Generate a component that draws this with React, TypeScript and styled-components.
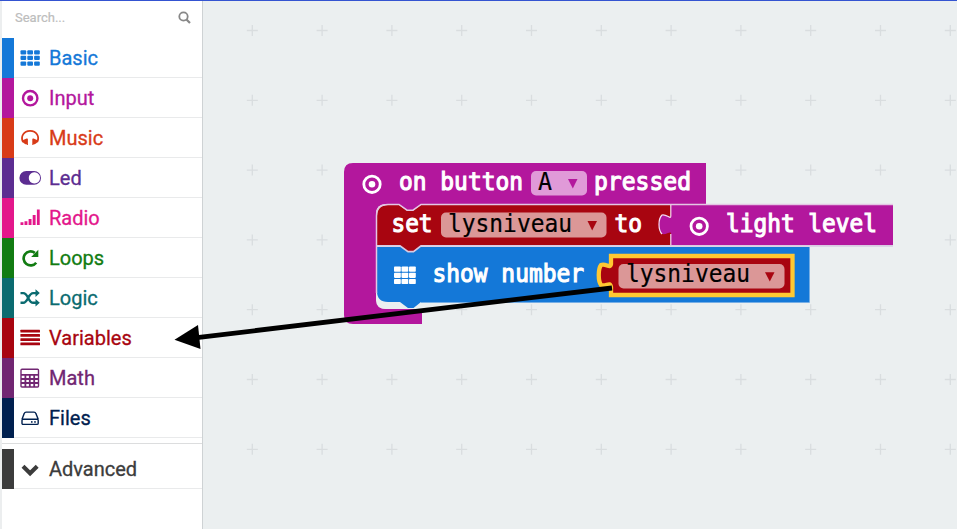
import React from "react";
import styled, { createGlobalStyle } from "styled-components";

const GlobalStyle = createGlobalStyle`
  * { box-sizing: border-box; }
  body { margin: 0; overflow: hidden; font-family: Roboto, sans-serif; }
`;

const Page = styled.div`
  display: flex;
  width: 957px;
  height: 529px;
  border-top: 1px solid #3454d1;
  background: #ebeff0;
  position: relative;
`;

const Toolbox = styled.aside`
  width: 203px;
  flex: none;
  display: flex;
  flex-direction: column;
  background: #fff;
  border-left: 2px solid #eceeef;
  border-right: 1px solid #ced2d4;
`;

const SearchBar = styled.div`
  height: 37px;
  flex: none;
  display: flex;
  align-items: center;
  justify-content: space-between;
  padding: 0 11px 4px 13px;
  font-size: 13px;
  color: #bdbdbd;
  -webkit-text-stroke: 0.2px currentColor;
`;

const Category = styled.div<{ $color: string }>`
  height: 40px;
  flex: none;
  display: flex;
  align-items: center;
  color: ${(p) => p.$color};
  border-left: 12px solid ${(p) => p.$color};
  font-size: 20px;
  -webkit-text-stroke: 0.3px currentColor;
  position: relative;
  &::after {
    content: "";
    position: absolute;
    inset: auto 0 0 0;
    border-bottom: 1px solid #e9eaeb;
  }
`;

const IconBox = styled.span`
  width: 35px;
  padding-left: 4px;
  display: flex;
  svg { display: block; }
`;

const Divider = styled.div`
  height: 11px;
  flex: none;
  padding-top: 5px;
  &::before { content: ""; display: block; border-top: 1px solid #dcddde; }
`;

const Workspace = styled.main`
  flex: 1;
  min-width: 0;
`;

const Overlay = styled.svg`
  position: absolute;
  left: 0;
  top: -1px;
  width: 957px;
  height: 529px;
`;

const Label = styled.text`
  font: 24px "DejaVu Sans Mono", monospace;
  fill: #fff;
  stroke: #fff;
  stroke-width: 1.1px;
`;

const FieldText = styled.text`
  font: 24px "DejaVu Sans Mono", monospace;
  fill: #000;
  stroke: #000;
  stroke-width: 0.2px;
`;

const Svg = ({ children }: { children: React.ReactNode }) => (
  <svg width="24" height="24" viewBox="0 0 24 24" fill="currentColor">{children}</svg>
);

const range = (n: number) => Array.from({ length: n }, (_, i) => i);

const icons: Record<string, React.ReactNode> = {
  grid: range(9).map((i) => (
    <rect key={i} x={2.5 + (i % 3) * 6.8} y={4.2 + Math.floor(i / 3) * 5.6} width="5.7" height="4.3" rx="1" />
  )),
  target: (
    <>
      <circle cx="12.2" cy="12.2" r="7.2" fill="none" stroke="currentColor" strokeWidth="2.4" />
      <circle cx="12.2" cy="12.2" r="3" />
    </>
  ),
  headphones: (
    <>
      <path d="M5 16.2C2.2 10.5 5.8 4.8 12.1 4.8S22 10.5 19.2 16.2" fill="none" stroke="currentColor" strokeWidth="1.8" />
      <path d="M4.6 14.2L8.6 12.6Q9.9 12.2 9.9 13.4V19H8.8V18.2H7.4Q5.4 17.5 4.2 15.6ZM19.6 14.2L15.6 12.6Q14.3 12.2 14.3 13.4V19H15.4V18.2H16.8Q18.8 17.5 20 15.6Z" />
    </>
  ),
  toggle: (
    <path fillRule="evenodd" d="M8.3 5H16.1a6.8 6.8 0 0 1 0 13.8H8.3A6.8 6.8 0 0 1 8.3 5ZM16.4 6.3a5.6 5.6 0 1 0 .01 0Z" />
  ),
  signal: (
    <path d="M2.5 16.2h2.9v2.8H2.5ZM6.5 15.2h2.9v3.8H6.5ZM10.6 13h2.9v6h-2.9ZM14.7 8.9h2.9v10.1h-2.9ZM18.9 3.4h2.8v15.6h-2.8Z" />
  ),
  repeat: (
    <>
      <path d="M18.2 16.7A7 7 0 1 1 16.8 6.8" fill="none" stroke="currentColor" strokeWidth="2.7" />
      <path d="M20.3 3.8V11H13.1Z" />
    </>
  ),
  shuffle: (
    <>
      <path d="M2.5 7.1H5.2C10.3 7.1 10 16.8 15.2 16.8H18.5M2.5 16.8H5.2C10.3 16.8 10 7.1 15.2 7.1H18.5" fill="none" stroke="currentColor" strokeWidth="2.4" />
      <path d="M17.5 3.3L21.8 7.1L17.5 10.9ZM17.5 13L21.8 16.8L17.5 20.6Z" />
    </>
  ),
  lines: range(4).map((i) => <rect key={i} x="2.4" y={3.8 + i * 4.2} width="19.6" height="2.8" rx="0.5" />),
  calculator: (
    <>
      <path d="M4 3.2H19.6Q20.5 3.2 20.5 4.2V20Q20.5 21 19.6 21H4Q3 21 3 20V4.2Q3 3.2 4 3.2Z" fill="none" stroke="currentColor" strokeWidth="1.4" />
      <path d="M3 8.8H20.5M3 13H20.5M3 17H20.5M7.4 8.8V21M11.8 8.8V21M16.2 8.8V21" stroke="currentColor" strokeWidth="1.8" />
    </>
  ),
  drive: (
    <>
      <path d="M4 13.3L6.2 7.6Q6.7 6.1 8.1 6.1H16Q17.4 6.1 17.9 7.6L20.2 13.3M5 13.3H19.2Q20.2 13.3 20.2 14.3V17.2Q20.2 18.4 19 18.4H5.1Q4 18.4 4 17.2V14.3Q4 13.3 5 13.3Z" fill="none" stroke="currentColor" strokeWidth="1.4" />
      <circle cx="13.8" cy="15.9" r="0.9" /><circle cx="17" cy="15.9" r="0.9" />
    </>
  ),
  chevron: <path d="M5 9.3L12.1 16.3L19.2 9.3" fill="none" stroke="currentColor" strokeWidth="4.1" />,
};

const categories = [
  ["Basic", "#1478d8", "grid"],
  ["Input", "#b3179d", "target"],
  ["Music", "#d83b18", "headphones"],
  ["Led", "#5c2d91", "toggle"],
  ["Radio", "#e3178b", "signal"],
  ["Loops", "#127c12", "repeat"],
  ["Logic", "#0b6b70", "shuffle"],
  ["Variables", "#a80510", "lines"],
  ["Math", "#712672", "calculator"],
  ["Files", "#00204f", "drive"],
];

const Row = ({ name, color, icon }: { name: string; color: string; icon: string }) => (
  <Category $color={color}>
    <IconBox><Svg>{icons[icon]}</Svg></IconBox>
    {name}
  </Category>
);

const Target = ({ x, y }: { x: number; y: number }) => (
  <g>
    <circle cx={x} cy={y} r="8.2" fill="none" stroke="#fff" strokeWidth="2.8" />
    <circle cx={x} cy={y} r="3.3" fill="#fff" />
  </g>
);

const Blocks = () => (
  <g>
    <path d="M344 172Q344 163 353 163H706V204H386Q376 204 376 214V300Q376 309 386 309H422V324H353Q344 324 344 315Z" fill="#b3179d" />
    <path d="M376 299Q377 309 387 309H422V302H386Z" fill="#ebeff0" />
    <path d="M377 247H809V302H421L413.5 308H408L400 302H388Q377 302 377 291Z" fill="#1478d8" />
    <path d="M809.5 247V302.5H421" fill="none" stroke="#76aee5" />
    <path d="M377 246V216Q377 205 388 205H399L407 210.5H413L421 205H671V246H421L413.5 252H408L400 246Z" fill="#a80510" />
    <path d="M398 204L407 210.2H413L422 204Z" fill="#b3179d" />
    <path d="M671 205H893V245H671V234C671 230 667 235 662 234C658 231 658 218 662 215C667 214 671 220 671 216Z" fill="#b3179d" />
    <path d="M376.5 293V216Q376.5 204.5 388 204.5H399L407 210.2H413L421 204.5H893" fill="none" stroke="#e4c6e4" strokeWidth="1.5" />
    <path d="M377 245.8H400L408 251.7H413.5L421 245.8H893" fill="none" stroke="#d8cbe2" strokeWidth="1.7" />
    <path d="M670.8 205V216C670.8 220 667 214 662 215C658 219 658 230 662 234M670.8 234V245" fill="none" stroke="#f4dff3" strokeWidth="1.2" />
    <Target x={372} y={184.3} />
    <Label x="399" y="189.5" textLength="124" lengthAdjust="spacingAndGlyphs">on button</Label>
    <rect x="531" y="171" width="56" height="24.5" rx="5" fill="#e09ad8" />
    <FieldText x="538" y="189.5" textLength="14" lengthAdjust="spacingAndGlyphs">A</FieldText>
    <path d="M568 179H577.5L572.8 188.5Z" fill="#b3179d" />
    <Label x="594" y="189.5" textLength="97" lengthAdjust="spacingAndGlyphs">pressed</Label>
    <Label x="391.5" y="231.5" textLength="41" lengthAdjust="spacingAndGlyphs">set</Label>
    <rect x="441" y="212.5" width="165.5" height="25" rx="5" fill="#db9797" />
    <FieldText x="448" y="231.5" textLength="124" lengthAdjust="spacingAndGlyphs">lysniveau</FieldText>
    <path d="M587.5 221H597L592.2 230.5Z" fill="#a80510" />
    <Label x="614.5" y="231.5" textLength="27.5" lengthAdjust="spacingAndGlyphs">to</Label>
    <Target x={699.2} y={226.3} />
    <Label x="726" y="231.5" textLength="151" lengthAdjust="spacingAndGlyphs">light level</Label>
    {range(9).map((i) => (
      <rect key={i} x={394 + (i % 3) * 7.5} y={266.5 + Math.floor(i / 3) * 6.2} width="6.8" height="5.2" rx="0.8" fill="#fff" />
    ))}
    <Label x="432.5" y="281.5" textLength="151.5" lengthAdjust="spacingAndGlyphs">show number</Label>
    <path d="M611 256H792.5V295H611V287C610 281 606 287 601 285C598 281 598 269 601 265C606 263 610 269 611 264Z" fill="#a80510" stroke="#ffc832" strokeWidth="4.3" />
    <rect x="618.5" y="264" width="166" height="24.5" rx="5" fill="#db9797" />
    <FieldText x="626" y="282" textLength="124" lengthAdjust="spacingAndGlyphs">lysniveau</FieldText>
    <path d="M765 272.2H774.5L769.8 281.5Z" fill="#a80510" />
  </g>
);

export default function App() {
  return (
    <>
      <GlobalStyle />
      <Page>
        <Toolbox>
          <SearchBar>
            Search...
            <svg width="13" height="13" viewBox="0 0 13 13" fill="none" stroke="#888" strokeWidth="1.8">
              <circle cx="5.5" cy="5.5" r="4.2" /><path d="M8.5 8.5L12 12" strokeWidth="2.2" />
            </svg>
          </SearchBar>
          {categories.map(([name, color, icon]) => <Row key={name} name={name} color={color} icon={icon} />)}
          <Divider />
          <Row name="Advanced" color="#3c3c3c" icon="chevron" />
        </Toolbox>
        <Workspace />
        <Overlay>
          {range(77).map((i) => {
            const x = 252.3 + (i % 11) * 69.8;
            const y = 30.5 + Math.floor(i / 11) * 69.8;
            return <path key={i} d={`M${x - 5.5} ${y}h11M${x} ${y - 5.5}v11`} stroke="#d9dddf" strokeWidth="1.3" />;
          })}
          <Blocks />
          <path d="M612 288L197 337.6" stroke="#000" strokeWidth="4.8" />
          <path d="M174.5 339.8L198 325L200.5 349Z" />
        </Overlay>
      </Page>
    </>
  );
}
